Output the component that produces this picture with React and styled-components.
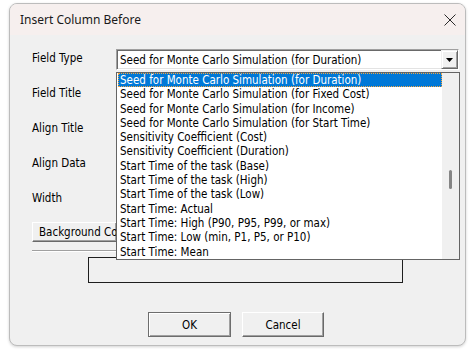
import React from 'react';
import styled, { createGlobalStyle } from 'styled-components';

const Global = createGlobalStyle`
  html, body { margin: 0; padding: 0; background: #ffffff; }
  body { width: 471px; height: 356px; overflow: hidden; }
`;

const dlgFont = `
  font-family: "DejaVu Sans Condensed", "DejaVu Sans", sans-serif;
  font-size: 11.5px;
  color: #000;
`;

const Window = styled.div`
  box-sizing: border-box;
  width: 457px;
  margin: 3px 0 0 9px;
  border: 1px solid #bcbcbc;
  border-radius: 8px;
  overflow: hidden;
  background: #f0f0f0;
  box-shadow: 0 1px 3px rgba(0, 0, 0, 0.18);
  display: flex;
  flex-direction: column;
`;

const TitleBar = styled.div`
  height: 31px;
  background: #f6efee;
  display: flex;
  align-items: center;
  justify-content: space-between;
  padding: 0 9px 0 10px;
`;

const Title = styled.span`
  font-family: "Noto Sans", "Open Sans", sans-serif;
  font-size: 12px;
  color: #1a1a1a;
`;

const CloseIcon = styled.svg`
  width: 12px;
  height: 12px;
  display: block;
`;

const Body = styled.div`
  padding: 5px 6px 0 22px;
  display: flex;
  flex-direction: column;
`;

const FormGrid = styled.div`
  display: grid;
  grid-template-columns: 84px 1fr;
  grid-auto-rows: 35px;
  align-items: center;
`;

const Label = styled.span`
  ${dlgFont}
`;

const Cell = styled.div`
  height: 21px;
`;

const ComboWrap = styled.div`
  position: relative;
  align-self: start;
  margin-top: 9px;
`;

const Combo = styled.div`
  box-sizing: border-box;
  height: 21px;
  background: #fff;
  border: 1px solid;
  border-color: #a0a0a0 #ffffff #ffffff #a0a0a0;
  box-shadow: inset 1px 1px 0 #696969, inset -1px -1px 0 #e3e3e3;
  display: flex;
  align-items: center;
  padding-left: 3px;
  ${dlgFont}
`;

const ComboText = styled.span`
  flex: 1;
  white-space: nowrap;
  overflow: hidden;
  padding-top: 1px;
`;

const ArrowBtn = styled.div`
  box-sizing: border-box;
  width: 17px;
  height: 19px;
  background: #f0f0f0;
  border: 1px solid;
  border-color: #f0f0f0 #696969 #696969 #f0f0f0;
  box-shadow: inset 1px 1px 0 #ffffff, inset -1px -1px 0 #a0a0a0;
  display: flex;
  align-items: center;
  justify-content: center;
`;

const DropList = styled.div`
  position: absolute;
  top: calc(100% + 2px);
  left: 0;
  width: 344px;
  height: 188px;
  box-sizing: border-box;
  border: 1px solid #646464;
  background: #fff;
  display: flex;
  z-index: 10;
`;

const Items = styled.div`
  flex: 1;
  display: flex;
  flex-direction: column;
  padding-left: 1px;
`;

const Item = styled.div`
  box-sizing: border-box;
  height: 14.3px;
  line-height: 13px;
  padding: 1px 0 0 2px;
  white-space: nowrap;
  ${dlgFont}
  color: ${(p) => (p.$selected ? '#ffffff' : '#000000')};
  background: ${(p) => (p.$selected ? '#0078d7' : 'transparent')};
  outline: ${(p) => (p.$selected ? '1px dotted #f4a640' : 'none')};
  outline-offset: -1px;
`;

const Track = styled.div`
  width: 17px;
  background: #f0f0f0;
  display: flex;
  flex-direction: column;
  align-items: center;
`;

const Thumb = styled.div`
  width: 3px;
  height: 19px;
  margin-top: 97px;
  border-radius: 2px;
  background: #858585;
`;

const RaisedButton = styled.div`
  box-sizing: border-box;
  height: ${(p) => p.$h || 25}px;
  width: ${(p) => p.$w}px;
  background: #f0f0f0;
  border: 1px solid;
  border-color: ${(p) =>
    p.$default ? '#6d6d6d' : '#ffffff #696969 #696969 #ffffff'};
  box-shadow: ${(p) =>
    p.$default
      ? 'inset 1px 1px 0 #ffffff, inset -1px -1px 0 #a0a0a0'
      : 'inset -1px -1px 0 #a0a0a0'};
  display: flex;
  align-items: center;
  justify-content: ${(p) => (p.$left ? 'flex-start' : 'center')};
  padding-left: ${(p) => (p.$left ? '6px' : '0')};
  ${dlgFont}
  white-space: nowrap;
  overflow: hidden;
`;

const BgButtonRow = styled.div`
  margin-top: 7px;
  display: flex;
`;

const Separator = styled.div`
  margin-top: 8px;
  border-top: 1px solid #a0a0a0;
  border-bottom: 1px solid #ffffff;
`;

const ColorBox = styled.div`
  box-sizing: border-box;
  margin: 5px 0 0 56px;
  width: 315px;
  height: 26px;
  border: 1px solid #1e1e1e;
  background: #f0f0f0;
`;

const Footer = styled.div`
  display: flex;
  justify-content: center;
  gap: 11px;
  padding: 29px 3px 8px 0;
`;

const items = [
  'Seed for Monte Carlo Simulation (for Duration)',
  'Seed for Monte Carlo Simulation (for Fixed Cost)',
  'Seed for Monte Carlo Simulation (for Income)',
  'Seed for Monte Carlo Simulation (for Start Time)',
  'Sensitivity Coefficient (Cost)',
  'Sensitivity Coefficient (Duration)',
  'Start Time of the task (Base)',
  'Start Time of the task (High)',
  'Start Time of the task (Low)',
  'Start Time: Actual',
  'Start Time: High (P90, P95, P99, or max)',
  'Start Time: Low (min, P1, P5, or P10)',
  'Start Time: Mean',
];

export default function App() {
  return (
    <>
      <Global />
      <Window>
        <TitleBar>
          <Title>Insert Column Before</Title>
          <CloseIcon viewBox="0 0 12 12">
            <path d="M0.5 0.5 L11.5 11.5 M11.5 0.5 L0.5 11.5" stroke="#2b2b2b" strokeWidth="1" fill="none" />
          </CloseIcon>
        </TitleBar>
        <Body>
          <FormGrid>
            <Label>Field Type</Label>
            <ComboWrap>
              <Combo>
                <ComboText>{items[0]}</ComboText>
                <ArrowBtn>
                  <svg width="7" height="4" viewBox="0 0 7 4">
                    <path d="M0 0 H7 L3.5 4 Z" fill="#000" />
                  </svg>
                </ArrowBtn>
              </Combo>
              <DropList>
                <Items>
                  {items.map((t, i) => (
                    <Item key={t} $selected={i === 0}>
                      {t}
                    </Item>
                  ))}
                </Items>
                <Track>
                  <Thumb />
                </Track>
              </DropList>
            </ComboWrap>
            <Label>Field Title</Label>
            <Cell />
            <Label>Align Title</Label>
            <Cell />
            <Label>Align Data</Label>
            <Cell />
            <Label>Width</Label>
            <Cell />
          </FormGrid>
          <BgButtonRow>
            <RaisedButton $w={85} $h={20} $left>
              Background Co
            </RaisedButton>
          </BgButtonRow>
          <Separator />
          <ColorBox />
        </Body>
        <Footer>
          <RaisedButton $w={83} $default>
            OK
          </RaisedButton>
          <RaisedButton $w={82}>Cancel</RaisedButton>
        </Footer>
      </Window>
    </>
  );
}
